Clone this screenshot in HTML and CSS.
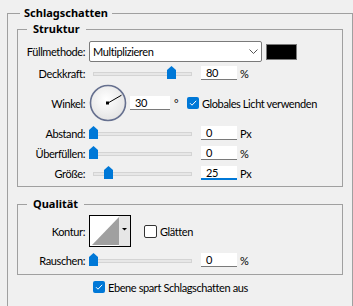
FILE: index.html
```html
<!DOCTYPE html>
<html lang="de">
<head>
    <meta charset="UTF-8">
    <meta name="viewport" content="width=device-width, initial-scale=1.0">
    <title>Schlagschatten</title>
    <link rel="stylesheet" href="styles.css">
</head>
<body>
    <fieldset class="group outer">
        <legend>Schlagschatten</legend>

        <!-- Struktur -->
        <fieldset class="group inner">
            <legend>Struktur</legend>

            <div class="row row-blend">
                <label class="lbl">Füllmethode:</label>
                <div class="select">
                    <span>Multiplizieren</span>
                    <svg class="chevron" width="9" height="5" viewBox="0 0 9 5">
                        <path d="M0.5,0.5 L4.5,4.5 L8.5,0.5" fill="none" stroke="#555" stroke-width="1" />
                    </svg>
                </div>
                <div class="swatch"></div>
            </div>

            <div class="row">
                <label class="lbl">Deckkraft:</label>
                <div class="slider"><div class="track"></div><span class="thumb" style="left: 78px"></span></div>
                <div class="num">80</div>
                <span class="unit">%</span>
            </div>

            <div class="row row-angle">
                <label class="lbl">Winkel:</label>
                <svg class="dial" width="38" height="38" viewBox="0 0 38 38">
                    <defs>
                        <radialGradient id="dialFill" cx="45%" cy="40%" r="60%">
                            <stop offset="0" stop-color="#ffffff" />
                            <stop offset="1" stop-color="#e4e4e4" />
                        </radialGradient>
                    </defs>
                    <circle cx="19" cy="19" r="17.5" fill="url(#dialFill)" stroke="#66708f" stroke-width="1.6" />
                    <line x1="19" y1="19" x2="32.5" y2="11.2" stroke="#000" stroke-width="1" />
                    <rect x="17" y="17.5" width="3" height="3" fill="#000" />
                </svg>
                <div class="num num-angle">30</div>
                <span class="deg">°</span>
                <span class="check on">
                    <svg width="12" height="12" viewBox="0 0 12 12"><path d="M3,6.2 L5,8.2 L9.2,3.8" fill="none" stroke="#fff" stroke-width="1" /></svg>
                </span>
                <span class="check-text">Globales Licht verwenden</span>
            </div>

            <div class="row">
                <label class="lbl">Abstand:</label>
                <div class="slider"><div class="track"></div><span class="thumb" style="left: 0px"></span></div>
                <div class="num">0</div>
                <span class="unit">Px</span>
            </div>

            <div class="row">
                <label class="lbl">Überfüllen:</label>
                <div class="slider"><div class="track"></div><span class="thumb" style="left: 0px"></span></div>
                <div class="num">0</div>
                <span class="unit">%</span>
            </div>

            <div class="row">
                <label class="lbl">Größe:</label>
                <div class="slider"><div class="track"></div><span class="thumb" style="left: 15px"></span></div>
                <div class="num focused">25</div>
                <span class="unit">Px</span>
            </div>
        </fieldset>

        <!-- Qualität -->
        <fieldset class="group inner quality">
            <legend>Qualität</legend>

            <div class="row row-contour">
                <label class="lbl">Kontur:</label>
                <svg class="contour" width="42" height="32" viewBox="0 0 42 32">
                    <rect x="0.5" y="0.5" width="41" height="31" fill="#fff" stroke="#000" />
                    <rect x="30" y="1" width="11" height="30" fill="#e6e6e6" />
                    <polygon points="3,30 30,2 30,30" fill="#a0a0a0" />
                    <polygon points="33,13 38,13 35.5,15.5" fill="#000" />
                </svg>
                <span class="check off"></span>
                <span class="check-text">Glätten</span>
            </div>

            <div class="row row-noise">
                <label class="lbl">Rauschen:</label>
                <div class="slider"><div class="track"></div><span class="thumb" style="left: 0px"></span></div>
                <div class="num">0</div>
                <span class="unit">%</span>
            </div>
        </fieldset>

        <div class="row row-last">
            <span class="check on">
                <svg width="12" height="12" viewBox="0 0 12 12"><path d="M3,6.2 L5,8.2 L9.2,3.8" fill="none" stroke="#fff" stroke-width="1" /></svg>
            </span>
            <span class="check-text">Ebene spart Schlagschatten aus</span>
        </div>
    </fieldset>
</body>
</html>
```

FILE: styles.css
```css
body {
    margin: 0;
    padding-top: 5px;
    width: 353px;
    height: 306px;
    box-sizing: border-box;
    overflow: hidden;
    background-color: #f0f0f0;
    font-family: Lato, "Noto Sans", sans-serif;
    font-size: 11px;
    letter-spacing: -0.4px;
    color: #000;
}
.group {
    margin: 0;
    min-width: 0;
    border: 1px solid #a0a0a0;
}
.group > legend {
    line-height: 16px;
    font-family: "Noto Sans", sans-serif;
    font-size: 11px;
    font-weight: bold;
    letter-spacing: 0;
}
.outer {
    margin-left: 7px;
    width: 346px;
    box-sizing: border-box;
    padding: 0 9px 9px;
    border-bottom: 0;
}
.outer > legend {
    margin-left: 3px;
    padding: 0 4px;
}
.inner {
    padding: 4px 0 3px;
}
.inner > legend {
    margin-left: 9px;
    padding: 0 6px;
}
.quality {
    margin-top: 9px;
    padding: 3px 0 4px;
}
.row {
    display: flex;
    align-items: center;
    height: 20px;
}
.row-blend {
    height: 21px;
    margin-bottom: 1px;
}
.row-angle {
    height: 40px;
}
.row-contour {
    height: 32px;
}
.row-noise {
    margin-top: 3px;
}
.row-last {
    margin-top: 2px;
    padding-left: 76px;
}
.lbl {
    flex: none;
    width: 67px;
    margin-right: 4px;
    text-align: right;
}
.select {
    flex: none;
    display: flex;
    align-items: center;
    justify-content: space-between;
    box-sizing: border-box;
    width: 173px;
    height: 21px;
    padding: 0 3px 0 3px;
    background-color: #fff;
    border: 1px solid #7a7a7a;
    border-radius: 2px;
}
.swatch {
    flex: none;
    box-sizing: border-box;
    width: 31px;
    height: 16px;
    margin-left: 4px;
    background-color: #000;
    border: 1px solid #7a7a7a;
}
.slider {
    flex: none;
    position: relative;
    width: 108px;
    height: 14px;
}
.track {
    position: absolute;
    left: 4px;
    right: 5px;
    top: 6px;
    height: 4px;
    box-sizing: border-box;
    background-color: #e7e7e7;
    border: 1px solid #d4d4d4;
}
.thumb {
    position: absolute;
    top: 0;
    width: 9px;
    height: 13px;
    background-color: #0078d7;
    clip-path: polygon(50% 0, 100% 30%, 100% 100%, 0 100%, 0 30%);
}
.num {
    flex: none;
    box-sizing: border-box;
    width: 36px;
    height: 14px;
    margin-left: 4px;
    padding-left: 5px;
    line-height: 13px;
    background-color: #fff;
    border-bottom: 1px solid #7a7a7a;
}
.num.focused {
    border-bottom: 2px solid #0078d7;
}
.num-angle {
    width: 40px;
    margin-left: 3px;
}
.unit {
    margin-left: 3px;
}
.deg {
    flex: none;
    width: 13px;
    margin-left: 4px;
}
.dial,
.contour {
    flex: none;
}
.check {
    flex: none;
    box-sizing: border-box;
    width: 12px;
    height: 12px;
    border-radius: 2px;
}
.check svg {
    display: block;
}
.check.on {
    background-color: #0078d7;
}
.check.off {
    width: 13px;
    height: 13px;
    margin-left: 13px;
    background-color: #fff;
    border: 1px solid #333;
}
.check-text {
    margin-left: 3px;
    white-space: nowrap;
}
```
